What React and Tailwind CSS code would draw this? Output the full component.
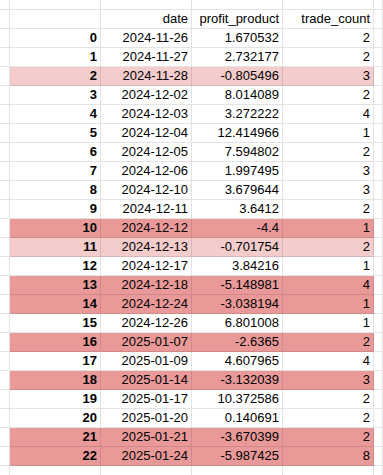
import React from "react";

const rows = [
  ["0", "2024-11-26", "1.670532", "2", ""],
  ["1", "2024-11-27", "2.732177", "2", ""],
  ["2", "2024-11-28", "-0.805496", "3", "light"],
  ["3", "2024-12-02", "8.014089", "2", ""],
  ["4", "2024-12-03", "3.272222", "4", ""],
  ["5", "2024-12-04", "12.414966", "1", ""],
  ["6", "2024-12-05", "7.594802", "2", ""],
  ["7", "2024-12-06", "1.997495", "3", ""],
  ["8", "2024-12-10", "3.679644", "3", ""],
  ["9", "2024-12-11", "3.6412", "2", ""],
  ["10", "2024-12-12", "-4.4", "1", "dark"],
  ["11", "2024-12-13", "-0.701754", "2", "light"],
  ["12", "2024-12-17", "3.84216", "1", ""],
  ["13", "2024-12-18", "-5.148981", "4", "dark"],
  ["14", "2024-12-24", "-3.038194", "1", "dark"],
  ["15", "2024-12-26", "6.801008", "1", ""],
  ["16", "2025-01-07", "-2.6365", "2", "dark"],
  ["17", "2025-01-09", "4.607965", "4", ""],
  ["18", "2025-01-14", "-3.132039", "3", "dark"],
  ["19", "2025-01-17", "10.372586", "2", ""],
  ["20", "2025-01-20", "0.140691", "2", ""],
  ["21", "2025-01-21", "-3.670399", "2", "dark"],
  ["22", "2025-01-24", "-5.987425", "8", "dark"],
];

const cell = "h-full border-r border-b border-[rgba(0,0,0,0.11)] flex items-center justify-end pr-[3px]";

function Row({ cells, tone, bold, h = "h-[19px]" }) {
  const bg = tone === "dark" ? "bg-[#ea9999]" : tone === "light" ? "bg-[#f4cccc]" : "";
  return (
    <div className={`flex ${h}`}>
      <div className={`w-[10px] ${cell}`} />
      <div className={`w-[91px] ${cell} ${bg} ${bold ? "font-bold" : ""}`}>{cells[0]}</div>
      <div className={`w-[91px] ${cell} ${bg}`}>{cells[1]}</div>
      <div className={`w-[91px] ${cell} ${bg}`}>{cells[2]}</div>
      <div className={`w-[91px] ${cell} ${bg}`}>{cells[3]}</div>
      <div className={`flex-1 ${cell}`} />
    </div>
  );
}

export default function App() {
  return (
    <div
      className="w-[383px] h-[475px] overflow-hidden bg-white text-black text-[13px]"
      style={{ fontFamily: '"Liberation Sans", Arial, sans-serif' }}
    >
      <Row cells={["", "", "", ""]} h="h-[10px]" />
      <Row cells={["", "date", "profit_product", "trade_count"]} />
      {rows.map((r) => (
        <Row key={r[0]} cells={r.slice(0, 4)} tone={r[4]} bold />
      ))}
      <Row cells={["", "", "", ""]} />
    </div>
  );
}
